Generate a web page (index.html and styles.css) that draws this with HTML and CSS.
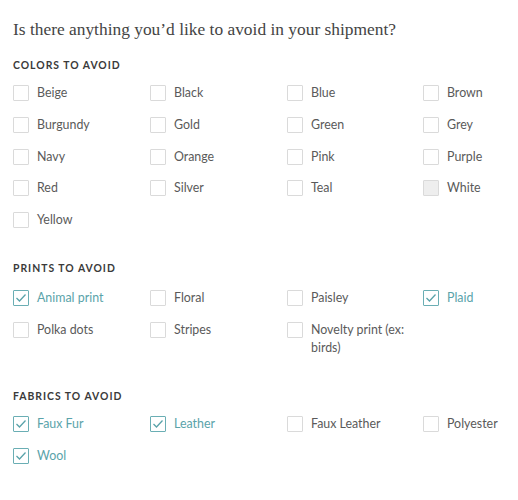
FILE: index.html
```html
<!DOCTYPE html>
<html>
<head>
<meta charset="utf-8">
<link rel="stylesheet" href="styles.css">
</head>
<body>
<div class="page">
  <h1 class="title">Is there anything you’d like to avoid in your shipment?</h1>

  <section class="group">
    <h2 class="heading">COLORS TO AVOID</h2>
    <div class="grid">
      <label class="item"><span class="box"></span><span class="text">Beige</span></label>
      <label class="item"><span class="box"></span><span class="text">Black</span></label>
      <label class="item"><span class="box"></span><span class="text">Blue</span></label>
      <label class="item"><span class="box"></span><span class="text">Brown</span></label>
      <label class="item"><span class="box"></span><span class="text">Burgundy</span></label>
      <label class="item"><span class="box"></span><span class="text">Gold</span></label>
      <label class="item"><span class="box"></span><span class="text">Green</span></label>
      <label class="item"><span class="box"></span><span class="text">Grey</span></label>
      <label class="item"><span class="box"></span><span class="text">Navy</span></label>
      <label class="item"><span class="box"></span><span class="text">Orange</span></label>
      <label class="item"><span class="box"></span><span class="text">Pink</span></label>
      <label class="item"><span class="box"></span><span class="text">Purple</span></label>
      <label class="item"><span class="box"></span><span class="text">Red</span></label>
      <label class="item"><span class="box"></span><span class="text">Silver</span></label>
      <label class="item"><span class="box"></span><span class="text">Teal</span></label>
      <label class="item"><span class="box box-filled"></span><span class="text">White</span></label>
      <label class="item"><span class="box"></span><span class="text">Yellow</span></label>
    </div>
  </section>

  <section class="group">
    <h2 class="heading heading-loose">PRINTS TO AVOID</h2>
    <div class="grid">
      <label class="item checked"><span class="box"><svg viewBox="0 0 16 16" width="16" height="16"><polyline points="3.5,8 6.5,11 12.5,4.5" fill="none" stroke="currentColor" stroke-width="1.3"/></svg></span><span class="text">Animal print</span></label>
      <label class="item"><span class="box"></span><span class="text">Floral</span></label>
      <label class="item"><span class="box"></span><span class="text">Paisley</span></label>
      <label class="item checked"><span class="box"><svg viewBox="0 0 16 16" width="16" height="16"><polyline points="3.5,8 6.5,11 12.5,4.5" fill="none" stroke="currentColor" stroke-width="1.3"/></svg></span><span class="text">Plaid</span></label>
      <label class="item"><span class="box"></span><span class="text">Polka dots</span></label>
      <label class="item"><span class="box"></span><span class="text">Stripes</span></label>
      <label class="item"><span class="box"></span><span class="text">Novelty print (ex: birds)</span></label>
    </div>
  </section>

  <section class="group">
    <h2 class="heading">FABRICS TO AVOID</h2>
    <div class="grid">
      <label class="item checked"><span class="box"><svg viewBox="0 0 16 16" width="16" height="16"><polyline points="3.5,8 6.5,11 12.5,4.5" fill="none" stroke="currentColor" stroke-width="1.3"/></svg></span><span class="text">Faux Fur</span></label>
      <label class="item checked"><span class="box"><svg viewBox="0 0 16 16" width="16" height="16"><polyline points="3.5,8 6.5,11 12.5,4.5" fill="none" stroke="currentColor" stroke-width="1.3"/></svg></span><span class="text">Leather</span></label>
      <label class="item"><span class="box"></span><span class="text">Faux Leather</span></label>
      <label class="item"><span class="box"></span><span class="text">Polyester</span></label>
      <label class="item checked"><span class="box"><svg viewBox="0 0 16 16" width="16" height="16"><polyline points="3.5,8 6.5,11 12.5,4.5" fill="none" stroke="currentColor" stroke-width="1.3"/></svg></span><span class="text">Wool</span></label>
    </div>
  </section>
</div>
</body>
</html>
```

FILE: styles.css
```css
html, body {
  margin: 0;
  padding: 0;
  background: #ffffff;
}

.page {
  padding: 19px 8px 0 13px;
}

.title {
  margin: 0;
  font-family: "Liberation Serif", "Times New Roman", serif;
  font-weight: normal;
  font-size: 17.4px;
  line-height: 20px;
  color: #444444;
}

.group {
  margin-top: 20px;
}

.group + .group {
  margin-top: 33px;
}

.heading {
  margin: 0 0 13px 0;
  font-family: Lato, "DejaVu Sans", sans-serif;
  font-weight: 700;
  font-size: 10.4px;
  line-height: 12px;
  letter-spacing: 1px;
  color: #3a3a3a;
}

.heading-loose {
  margin-bottom: 15px;
}

.grid {
  display: grid;
  grid-template-columns: 137px 137px 136px 1fr;
  row-gap: 13.75px;
}

.item {
  display: flex;
  align-items: flex-start;
  font-family: Lato, "Open Sans", sans-serif;
  font-size: 12.4px;
  line-height: 18px;
  color: #5a5a5a;
}

.box {
  flex: none;
  width: 14px;
  height: 14px;
  margin-top: 1px;
  margin-right: 8px;
  border: 1px solid #dadada;
  border-radius: 1px;
  position: relative;
  color: #5aa3aa;
}

.box svg {
  position: absolute;
  left: -1px;
  top: -1px;
}

.box-filled {
  background: #eeeeee;
}

.text {
  max-width: 110px;
}

.checked {
  color: #5aa3aa;
}

.checked .box {
  border-color: #6aaeb4;
}
```
